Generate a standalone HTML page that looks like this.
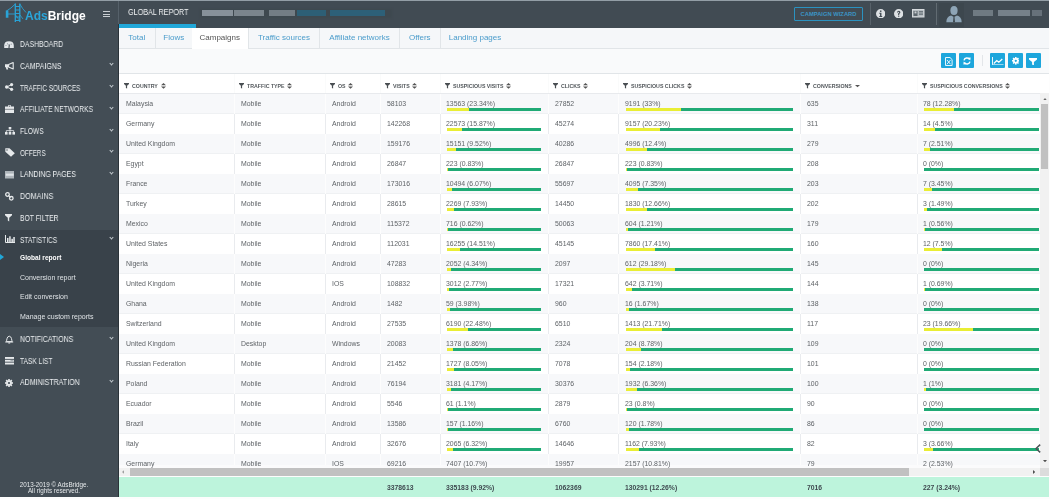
<!DOCTYPE html>
<html><head><meta charset="utf-8">
<style>
*{box-sizing:border-box}
html,body{margin:0;padding:0}
body{width:1050px;height:499px;overflow:hidden;position:relative;background:#fdfdfd;font-family:"Liberation Sans",sans-serif;}
.abs{position:absolute}
#topstrip{position:absolute;left:0;top:0;width:1049px;height:1px;background:#939ea6}
#sidebar{position:absolute;left:0;top:1px;width:118px;height:496px;background:#434d55}
#sbline{position:absolute;left:118px;top:24px;width:1px;height:473px;background:#2b3339}
#sbline2{position:absolute;left:118px;top:1px;width:1px;height:23px;background:#56616a}
.logo-ads{position:absolute;left:25px;top:9px;line-height:14px;font-size:12px;font-weight:bold;color:#2aa6da;letter-spacing:0}
.logo-ads b{color:#fff}
.ham{position:absolute;left:103px;top:11px;width:7px;height:1.4px;background:#c9ced2}
.mi{position:absolute;left:20px;font-size:8.4px;color:#eceff1;white-space:nowrap;line-height:10px;transform:scaleX(0.81);transform-origin:0 50%}
.chev{position:absolute;left:109.5px;width:3px;height:3px;border-right:1.1px solid #c5cbcf;border-bottom:1.1px solid #c5cbcf;transform:rotate(45deg)}
.ico{position:absolute;left:4px}
#substat{position:absolute;left:0;top:230px;width:118px;height:97px;background:#39424a}
.sub{position:absolute;left:20px;font-size:7px;color:#dfe3e6;white-space:nowrap;line-height:10px}
#topbar{position:absolute;left:119px;top:1px;width:930px;height:26.5px;background:#414b53}
#gr{position:absolute;left:127.5px;top:7px;font-size:8.4px;color:#f2f4f5;line-height:10px;white-space:nowrap;transform:scaleX(0.86);transform-origin:0 50%}
#grbar{position:absolute;left:119px;top:24px;width:77px;height:3.5px;background:#21a7d8}
#tabs{position:absolute;left:119px;top:27.5px;width:930px;height:21px;background:#f5f7f9;border-bottom:1px solid #e1e5e8}
.tab{position:absolute;top:0;height:20.5px;border-right:1px solid #e1e5e8;font-size:8px;color:#4a9ccb;line-height:20px;text-align:center;white-space:nowrap}
.tab.act{background:#fff;color:#555}
#toolbar{position:absolute;left:119px;top:48.5px;width:930px;height:25px;background:#f9fafb;border-bottom:1px solid #e1e5e8}
.tbtn{position:absolute;top:53px;width:15px;height:15px;background:#1da6dc;border-radius:1px}
#thead{position:absolute;left:119px;top:73.5px;width:930px;height:19.5px;background:#fff}
#hline{position:absolute;left:119px;top:93px;width:921px;height:1px;background:#e8eaed}
.hcell{position:absolute;top:83px;height:6px;white-space:nowrap;line-height:6px}
.filt{display:inline-block;vertical-align:top}
.srt{display:inline-block;vertical-align:top;margin-left:3px}
.ht{display:inline-block;vertical-align:top;margin-left:2.8px;font-size:5.25px;font-weight:bold;color:#52575b;line-height:6px}
.sort{display:inline-block;vertical-align:top;margin-left:3px;width:5px;height:5.5px;background:#666;clip-path:polygon(50% 0,100% 40%,0 40%,0 55%,100% 55%,50% 100%)}
.sortd{display:inline-block;vertical-align:top;margin-left:3px;margin-top:1.5px;width:5px;height:3px;background:#555;clip-path:polygon(0 0,100% 0,50% 100%)}
.hvb{position:absolute;top:73.5px;width:1px;height:19.5px;background:#fafbfb}
.row{position:absolute;left:119px;width:921px;height:20px}
.vb{position:absolute;width:1px;height:20px}
.cell{position:absolute;height:20px;line-height:20px;font-size:6.9px;color:#5f6367;white-space:nowrap}
.bar{position:absolute;height:2.6px;background:#20aa75}
.bar i{display:block;height:2.6px;background:#e9ee34}
#clip{position:absolute;left:119px;top:93px;width:930px;height:375px;overflow:hidden}
#vscroll{position:absolute;left:1040px;top:93px;width:9px;height:375px;background:#f1f1f1}
#vthumb{position:absolute;left:1040.5px;top:104px;width:7.5px;height:65px;background:#c1c1c1}
#hscroll{position:absolute;left:119px;top:467.5px;width:921px;height:8.5px;background:#f1f1f1}
#hthumb{position:absolute;left:130px;top:467.5px;width:779px;height:8.5px;background:#c1c1c1}
#hcorner{position:absolute;left:1040px;top:467.5px;width:9px;height:8.5px;background:#dcdcdc}
#footer{position:absolute;left:119px;top:476.5px;width:930px;height:20px;background:#bdf4dc}
.fcell{position:absolute;top:477.5px;height:20.5px;line-height:20.5px;font-size:6.8px;font-weight:bold;color:#3f4a50;white-space:nowrap}
#copy{position:absolute;left:0;top:481.5px;width:108px;text-align:center;font-size:6.3px;color:#e6e9eb;line-height:5.8px}
.cell,.mi,.sub,.tab,.ht,#gr,.fcell,#copy,.logo-ads{will-change:transform}
</style></head><body>
<div id="topstrip"></div>
<div id="sidebar"></div>
<div id="substat"></div>
<div id="sbline2"></div>
<div id="sbline"></div>
<div class="logo-ads">Ads<b>Bridge</b></div>
<div class="ham" style="top:11px"></div><div class="ham" style="top:13.5px"></div><div class="ham" style="top:16px"></div>

<div class="mi" style="top:39px;transform:scaleX(0.814)">DASHBOARD</div>
<div class="mi" style="top:60.5px;transform:scaleX(0.836)">CAMPAIGNS</div><div class="chev" style="top:62px"></div>
<div class="mi" style="top:82.5px;transform:scaleX(0.763)">TRAFFIC SOURCES</div><div class="chev" style="top:84px"></div>
<div class="mi" style="top:104px;transform:scaleX(0.798)">AFFILIATE NETWORKS</div><div class="chev" style="top:105.5px"></div>
<div class="mi" style="top:126px;transform:scaleX(0.796)">FLOWS</div><div class="chev" style="top:127.5px"></div>
<div class="mi" style="top:147.5px;transform:scaleX(0.754)">OFFERS</div><div class="chev" style="top:149px"></div>
<div class="mi" style="top:169px;transform:scaleX(0.826)">LANDING PAGES</div><div class="chev" style="top:170.5px"></div>
<div class="mi" style="top:191px;transform:scaleX(0.854)">DOMAINS</div>
<div class="mi" style="top:212.5px;transform:scaleX(0.811)">BOT FILTER</div>
<div class="mi" style="top:234.5px;transform:scaleX(0.791)">STATISTICS</div><div class="chev" style="top:236px"></div>
<div class="sub" style="top:252.6px;font-weight:bold;color:#fff;font-size:6.6px">Global report</div>
<div class="sub" style="top:272.6px">Conversion report</div>
<div class="sub" style="top:292.1px">Edit conversion</div>
<div class="sub" style="top:311.6px">Manage custom reports</div>
<div class="mi" style="top:334px;transform:scaleX(0.832)">NOTIFICATIONS</div><div class="chev" style="top:335.5px"></div>
<div class="mi" style="top:356px;transform:scaleX(0.785)">TASK LIST</div>
<div class="mi" style="top:377px;transform:scaleX(0.84)">ADMINISTRATION</div><div class="chev" style="top:378.5px"></div>
<div class="abs" style="left:0;top:254px;width:0;height:0;border-top:3.5px solid transparent;border-bottom:3.5px solid transparent;border-left:4px solid #21a7d8"></div>

<svg class="abs" style="left:2px;top:2px" width="26" height="22" viewBox="0 0 26 22">
 <g stroke="#29a3d6" fill="none">
  <path d="M13.3,1.5 V20 M17.8,1.5 V20" stroke-width="1.3"/>
  <path d="M13,4.5 H18 M13,8 H18 M13,11.5 H18 M13,15 H18 M13,18.5 H18" stroke-width="1"/>
  <path d="M4.5,9 Q9,6.5 13.3,2" stroke-width="0.9"/><path d="M17.8,2 Q20.5,7 24,10.5" stroke-width="0.9"/>
  <path d="M4.5,12 H13" stroke-width="0.9"/>
  <path d="M13.5,13 L18,19 M18,13 L21,17" stroke-width="0.8"/>
 </g>
 <path d="M3.8,8.5 h2.6 v7.3 h-2.6z" fill="#29a3d6"/>
</svg>
<svg class="abs" style="left:4.3px;top:40.8px" width="10" height="7.5" viewBox="0 0 10 7.5"><path d="M0.2,7.2 V4.6 Q0.2,0.2 5,0.2 Q9.8,0.2 9.8,4.6 V7.2 Q9.8,7.4 9.4,7.4 H0.6 Q0.2,7.4 0.2,7.2Z" fill="#e3e7ea"/><path d="M5,7 L5.3,3.5" stroke="#434d55" stroke-width="1.1"/><path d="M3.3,2.2 L4.2,3.8" stroke="#8a939a" stroke-width="0.8"/><circle cx="7.2" cy="3.2" r="0.6" fill="#8a939a"/><circle cx="2" cy="4.5" r="0.6" fill="#8a939a"/></svg>
<svg class="abs" style="left:4.5px;top:61.5px" width="9" height="8" viewBox="0 0 9 8"><path d="M0,2.3 H3.5 V5.3 H2.6 L3.2,7.6 H1.4 L0.9,5.3 H0 Z" fill="#e6e9eb"/><path d="M3.6,2.5 L8.2,0.6 V7 L3.6,5.1 Z" fill="none" stroke="#e6e9eb" stroke-width="1.1" stroke-linejoin="round"/></svg>
<svg class="abs" style="left:4.5px;top:82.8px" width="9" height="8" viewBox="0 0 9 8"><g fill="#e6e9eb"><circle cx="1.7" cy="4" r="1.7"/><circle cx="6.6" cy="1.6" r="1.6"/><circle cx="6.6" cy="6.3" r="1.6"/></g><path d="M1.7,4 L6.6,1.6 M1.7,4 L6.6,6.3" stroke="#e6e9eb" stroke-width="1"/></svg>
<svg class="abs" style="left:4.5px;top:104.5px" width="9" height="8" viewBox="0 0 9 8"><path d="M3,0.3 H6 V1.6 H9 V7.9 H0 V1.6 H3 Z" fill="#e6e9eb"/><path d="M3.8,0.9 H5.2 V1.6 H3.8Z" fill="#434d55"/><path d="M0,4.3 H9" stroke="#434d55" stroke-width="0.6"/></svg>
<svg class="abs" style="left:4.5px;top:127px" width="10" height="8" viewBox="0 0 10 8"><g fill="#e6e9eb"><rect x="3.7" y="0" width="2.6" height="2.3"/><rect x="0" y="5" width="2.6" height="2.6"/><rect x="3.7" y="5" width="2.6" height="2.6"/><rect x="7.4" y="5" width="2.6" height="2.6"/></g><path d="M5,2.3 V5 M1.3,5 V3.6 H8.7 V5" stroke="#e6e9eb" stroke-width="0.8" fill="none"/></svg>
<svg class="abs" style="left:4.5px;top:147.5px" width="10.5" height="9" viewBox="0 0 10.5 9"><path d="M0.3,0.3 H4.5 L9.8,5.2 L6,8.8 L0.3,3.8 Z" fill="#e6e9eb"/><circle cx="2" cy="2" r="0.7" fill="#434d55"/></svg>
<svg class="abs" style="left:4.5px;top:170.5px" width="9.5" height="8" viewBox="0 0 9.5 8"><rect x="0" y="0" width="9.5" height="7.5" fill="#aeb5ba"/><rect x="0.8" y="2.6" width="7.9" height="2.2" fill="#dfe3e6"/></svg>
<svg class="abs" style="left:4.5px;top:191.5px" width="9" height="9" viewBox="0 0 9 9"><g fill="none" stroke="#e6e9eb" stroke-width="1.3"><circle cx="2.5" cy="2.5" r="1.8"/><circle cx="6.3" cy="6.3" r="1.8"/></g><path d="M3.3,3.3 L5.5,5.5" stroke="#e6e9eb" stroke-width="1.1"/></svg>
<svg class="abs" style="left:5.2px;top:214.3px" width="7" height="7.5" viewBox="0 0 7 7.5"><path d="M0,0 H7 V1.3 L4.2,3.8 V7.5 L2.8,6.5 V3.8 L0,1.3 Z" fill="#e6e9eb"/></svg>
<svg class="abs" style="left:4.5px;top:235px" width="10" height="8" viewBox="0 0 10 8"><path d="M0.5,0 V7.5 H10" stroke="#e6e9eb" stroke-width="1" fill="none"/><g fill="#e6e9eb"><rect x="2" y="3" width="1.5" height="4"/><rect x="4.2" y="1.3" width="1.5" height="5.7"/><rect x="6.4" y="3.8" width="1.5" height="3.2"/><rect x="8.3" y="2" width="1.5" height="5"/></g></svg>
<svg class="abs" style="left:5px;top:335px" width="8.5" height="9" viewBox="0 0 8.5 9"><path d="M1.3,6.6 C2,5.3 1.6,1.4 4.25,1.2 C6.9,1.4 6.5,5.3 7.2,6.6 Z" fill="none" stroke="#e6e9eb" stroke-width="1"/><path d="M0.3,7 H8.2" stroke="#e6e9eb" stroke-width="1"/><path d="M3.3,8 H5.2" stroke="#e6e9eb" stroke-width="1"/></svg>
<svg class="abs" style="left:4.5px;top:357px" width="9.5" height="7.5" viewBox="0 0 9.5 7.5"><g fill="#e6e9eb"><rect x="0" y="0" width="9.5" height="1.9"/><rect x="0" y="2.8" width="9.5" height="1.9"/><rect x="0" y="5.6" width="9.5" height="1.9"/></g><rect x="5.5" y="3.3" width="3" height="0.9" fill="#8d969c"/></svg>
<svg class="abs" style="left:5px;top:378.7px" width="8" height="8" viewBox="0 0 8 8"><g fill="#e6e9eb"><circle cx="4" cy="4" r="2.8"/><rect x="3.2" y="0" width="1.6" height="8"/><rect x="0" y="3.2" width="8" height="1.6"/><rect x="3.2" y="0" width="1.6" height="8" transform="rotate(45 4 4)"/><rect x="3.2" y="0" width="1.6" height="8" transform="rotate(-45 4 4)"/></g><circle cx="4" cy="4" r="1.1" fill="#434d55"/></svg>

<div id="copy">2013-2019 © AdsBridge.<br>All rights reserved.</div>

<div id="topbar"></div>
<div id="gr">GLOBAL REPORT</div>
<div id="grbar"></div>
<div class="abs" style="filter:blur(0.8px);left:200px;top:8.5px;width:192px;height:9px;background:#3e484f"></div>
<div class="abs" style="filter:blur(0.5px);left:202px;top:10px;width:31px;height:6px;background:#87919a"></div>
<div class="abs" style="filter:blur(0.5px);left:234px;top:10px;width:30px;height:6px;background:#7b858d"></div>
<div class="abs" style="filter:blur(0.5px);left:269px;top:10px;width:26px;height:6px;background:#737d85"></div>
<div class="abs" style="filter:blur(0.5px);left:297px;top:10px;width:29px;height:6px;background:#2d5f76"></div>
<div class="abs" style="filter:blur(0.5px);left:330px;top:10px;width:55px;height:6px;background:#2d6078"></div>
<div class="abs" style="left:794px;top:7px;width:69px;height:14px;border:1px solid #2b92c0;border-radius:1px"></div>
<div class="abs" style="left:794px;top:7px;width:69px;height:14px;line-height:14px;text-align:center;font-size:5.8px;font-weight:bold;color:#3b94c4;white-space:nowrap">CAMPAIGN WIZARD</div>
<div class="abs" style="left:870px;top:3px;width:1px;height:22px;background:#58626a"></div>
<svg class="abs" style="left:876px;top:8.7px" width="9.4" height="9.4" viewBox="0 0 10 10"><circle cx="5" cy="5" r="5" fill="#dde1e4"/><rect x="4.2" y="1.6" width="1.6" height="1.5" fill="#414b53"/><path d="M3.5,4 H5.8 V7.5 H6.6 V8.5 H3.5 V7.5 H4.3 V5 H3.5Z" fill="#414b53"/></svg>
<svg class="abs" style="left:894px;top:8.7px" width="9.4" height="9.4" viewBox="0 0 10 10"><circle cx="5" cy="5" r="5" fill="#dde1e4"/><path d="M3.2,3.8 Q3.3,1.8 5.1,1.8 Q6.9,1.9 6.8,3.6 Q6.6,4.6 5.6,5.1 L5.6,6.3 H4.4 L4.4,4.6 Q5.5,4.1 5.5,3.6 Q5.4,3 5,3 Q4.5,3 4.4,3.8Z" fill="#414b53"/><rect x="4.4" y="7" width="1.2" height="1.3" fill="#414b53"/></svg>
<svg class="abs" style="left:912px;top:9px" width="12.5" height="8.5" viewBox="0 0 12.5 8.5"><rect x="0.5" y="0.5" width="11.5" height="7.5" fill="#b5bcc1" stroke="#d6dadd" stroke-width="1"/><rect x="1.5" y="2" width="4" height="5" fill="#5d676e"/><rect x="2.5" y="2.4" width="2" height="2" fill="#c9ced2"/><rect x="7" y="2.2" width="4" height="1.2" fill="#5d676e"/><rect x="7" y="4.5" width="4" height="1.2" fill="#5d676e"/></svg>
<div class="abs" style="left:936px;top:3px;width:1px;height:22px;background:#616b72"></div>
<div class="abs" style="left:938.8px;top:2.5px;width:25.5px;height:24px;background:#3d474e"></div>
<svg class="abs" style="left:945.5px;top:6px" width="16" height="16.5" viewBox="0 0 16 16.5"><ellipse cx="8" cy="4.5" rx="3.6" ry="4.5" fill="#8ea5b7"/><path d="M0.3,16.3 Q0.5,10.5 5,9.6 L8,11 L11,9.6 Q15.5,10.5 15.7,16.3Z" fill="#8ea5b7"/><path d="M7.5,10.5 H8.5 L9,16.3 H7Z" fill="#3d474e"/></svg>
<div class="abs" style="filter:blur(0.5px);left:973px;top:10px;width:19.5px;height:6px;background:#6f7a82"></div>
<div class="abs" style="filter:blur(0.5px);left:997.5px;top:10px;width:32px;height:6px;background:#76818a"></div>
<div class="abs" style="filter:blur(0.5px);left:1031.5px;top:10px;width:10px;height:6px;background:#67717a"></div>


<div id="tabs">
<div class="tab" style="left:0;width:36.5px">Total</div>
<div class="tab" style="left:36.5px;width:36.5px">Flows</div>
<div class="tab act" style="left:73px;width:56.5px;height:21px">Campaigns</div>
<div class="tab" style="left:129.5px;width:71px">Traffic sources</div>
<div class="tab" style="left:200.5px;width:80px">Affiliate networks</div>
<div class="tab" style="left:280.5px;width:40.5px">Offers</div>
<div class="tab" style="left:321px;width:70px;border-right:none">Landing pages</div>
</div>
<div id="toolbar"></div>
<div class="tbtn" style="left:941px"></div>
<svg class="abs" style="left:945px;top:56.5px" width="7.6" height="9" viewBox="0 0 7.6 9"><path d="M0.5,0.5 H5 L7.1,2.6 V8.5 H0.5Z" fill="none" stroke="#e8f6fc" stroke-width="1"/><path d="M2,3 L5.5,7.2 M5.5,3 L2,7.2" stroke="#e8f6fc" stroke-width="1"/></svg>
<div class="tbtn" style="left:958.5px"></div>
<svg class="abs" style="left:962.5px;top:57px" width="8" height="8" viewBox="0 0 8 8"><path d="M1,3.3 A3,3 0 0 1 6.6,2.6" fill="none" stroke="#fff" stroke-width="1.4"/><path d="M5,0.8 L7.6,0.5 L7.3,3.4Z" fill="#fff"/><path d="M7,4.7 A3,3 0 0 1 1.4,5.4" fill="none" stroke="#fff" stroke-width="1.4"/><path d="M3,7.2 L0.4,7.5 L0.7,4.6Z" fill="#fff"/></svg>
<div class="abs" style="left:982px;top:55px;width:1px;height:11px;background:#e3e6e9"></div>
<div class="tbtn" style="left:990px"></div>
<svg class="abs" style="left:992px;top:56.5px" width="11.5" height="8.5" viewBox="0 0 11.5 8.5"><path d="M0.5,0 V7.9 H11.5" fill="none" stroke="#e8f6fc" stroke-width="1"/><path d="M1.8,6.5 L4.8,3.6 L6.8,5.3 L10.3,2" fill="none" stroke="#fff" stroke-width="1.2"/></svg>
<div class="tbtn" style="left:1008px"></div>
<svg class="abs" style="left:1011.6px;top:57.2px" width="7.6" height="7.6" viewBox="0 0 8 8"><g fill="#fff"><circle cx="4" cy="4" r="2.9"/><rect x="3.2" y="0" width="1.6" height="8"/><rect x="0" y="3.2" width="8" height="1.6"/><rect x="3.2" y="0" width="1.6" height="8" transform="rotate(45 4 4)"/><rect x="3.2" y="0" width="1.6" height="8" transform="rotate(-45 4 4)"/></g><circle cx="4" cy="4" r="1.2" fill="#1da6dc"/></svg>
<div class="tbtn" style="left:1025.5px"></div>
<svg class="abs" style="left:1029px;top:57.8px" width="8" height="7.5" viewBox="0 0 8 7.5"><path d="M0,0 H8 V1.4 L4.9,4 V7.5 L3.1,6.6 V4 L0,1.4Z" fill="#fff"/></svg>

<div id="thead"></div>
<div class="hcell" style="left:124px"><svg class="filt" width="5" height="5.5" viewBox="0 0 5 5.5"><path d="M0,0H5V0.9L3.1,2.7V5.5L1.9,4.9V2.7L0,0.9Z" fill="#4a4f53"/></svg><span class="ht">COUNTRY</span><svg class="srt" width="5" height="6" viewBox="0 0 5 6"><path d="M2.5,0L5,2.2H0Z M0,3.5H5L2.5,5.7Z" fill="#555"/></svg></div>
<div class="hcell" style="left:239px"><svg class="filt" width="5" height="5.5" viewBox="0 0 5 5.5"><path d="M0,0H5V0.9L3.1,2.7V5.5L1.9,4.9V2.7L0,0.9Z" fill="#4a4f53"/></svg><span class="ht">TRAFFIC TYPE</span><svg class="srt" width="5" height="6" viewBox="0 0 5 6"><path d="M2.5,0L5,2.2H0Z M0,3.5H5L2.5,5.7Z" fill="#555"/></svg></div>
<div class="hvb" style="left:234px"></div>
<div class="hcell" style="left:330px"><svg class="filt" width="5" height="5.5" viewBox="0 0 5 5.5"><path d="M0,0H5V0.9L3.1,2.7V5.5L1.9,4.9V2.7L0,0.9Z" fill="#4a4f53"/></svg><span class="ht">OS</span><svg class="srt" width="5" height="6" viewBox="0 0 5 6"><path d="M2.5,0L5,2.2H0Z M0,3.5H5L2.5,5.7Z" fill="#555"/></svg></div>
<div class="hvb" style="left:325px"></div>
<div class="hcell" style="left:385px"><svg class="filt" width="5" height="5.5" viewBox="0 0 5 5.5"><path d="M0,0H5V0.9L3.1,2.7V5.5L1.9,4.9V2.7L0,0.9Z" fill="#4a4f53"/></svg><span class="ht">VISITS</span><svg class="srt" width="5" height="6" viewBox="0 0 5 6"><path d="M2.5,0L5,2.2H0Z M0,3.5H5L2.5,5.7Z" fill="#555"/></svg></div>
<div class="hvb" style="left:380px"></div>
<div class="hcell" style="left:445px"><svg class="filt" width="5" height="5.5" viewBox="0 0 5 5.5"><path d="M0,0H5V0.9L3.1,2.7V5.5L1.9,4.9V2.7L0,0.9Z" fill="#4a4f53"/></svg><span class="ht">SUSPICIOUS VISITS</span><svg class="srt" width="5" height="6" viewBox="0 0 5 6"><path d="M2.5,0L5,2.2H0Z M0,3.5H5L2.5,5.7Z" fill="#555"/></svg></div>
<div class="hvb" style="left:440px"></div>
<div class="hcell" style="left:553px"><svg class="filt" width="5" height="5.5" viewBox="0 0 5 5.5"><path d="M0,0H5V0.9L3.1,2.7V5.5L1.9,4.9V2.7L0,0.9Z" fill="#4a4f53"/></svg><span class="ht">CLICKS</span><svg class="srt" width="5" height="6" viewBox="0 0 5 6"><path d="M2.5,0L5,2.2H0Z M0,3.5H5L2.5,5.7Z" fill="#555"/></svg></div>
<div class="hvb" style="left:548px"></div>
<div class="hcell" style="left:623px"><svg class="filt" width="5" height="5.5" viewBox="0 0 5 5.5"><path d="M0,0H5V0.9L3.1,2.7V5.5L1.9,4.9V2.7L0,0.9Z" fill="#4a4f53"/></svg><span class="ht">SUSPICIOUS CLICKS</span><svg class="srt" width="5" height="6" viewBox="0 0 5 6"><path d="M2.5,0L5,2.2H0Z M0,3.5H5L2.5,5.7Z" fill="#555"/></svg></div>
<div class="hvb" style="left:618px"></div>
<div class="hcell" style="left:805px"><svg class="filt" width="5" height="5.5" viewBox="0 0 5 5.5"><path d="M0,0H5V0.9L3.1,2.7V5.5L1.9,4.9V2.7L0,0.9Z" fill="#4a4f53"/></svg><span class="ht">CONVERSIONS</span><svg class="srt" width="5" height="3" viewBox="0 0 5 3" style="margin-top:1.5px"><path d="M0,0H5L2.5,2.3Z" fill="#555"/></svg></div>
<div class="hvb" style="left:800px"></div>
<div class="hcell" style="left:922px"><svg class="filt" width="5" height="5.5" viewBox="0 0 5 5.5"><path d="M0,0H5V0.9L3.1,2.7V5.5L1.9,4.9V2.7L0,0.9Z" fill="#4a4f53"/></svg><span class="ht">SUSPICIOUS CONVERSIONS</span><svg class="srt" width="5" height="6" viewBox="0 0 5 6"><path d="M2.5,0L5,2.2H0Z M0,3.5H5L2.5,5.7Z" fill="#555"/></svg></div>
<div class="hvb" style="left:917px"></div>
<div id="clip"><div style="position:absolute;left:-119px;top:-93px">
<div class="row" style="top:93px;height:21px;background:#f7f8fa"></div>
<div class="row" style="top:114px;height:20px;background:#ffffff"></div>
<div class="row" style="top:134px;height:20px;background:#f7f8fa"></div>
<div class="row" style="top:154px;height:20px;background:#ffffff"></div>
<div class="row" style="top:174px;height:20px;background:#f7f8fa"></div>
<div class="row" style="top:194px;height:20px;background:#ffffff"></div>
<div class="row" style="top:214px;height:20px;background:#f7f8fa"></div>
<div class="row" style="top:234px;height:20px;background:#ffffff"></div>
<div class="row" style="top:254px;height:20px;background:#f7f8fa"></div>
<div class="row" style="top:274px;height:20px;background:#ffffff"></div>
<div class="row" style="top:294px;height:20px;background:#f7f8fa"></div>
<div class="row" style="top:314px;height:20px;background:#ffffff"></div>
<div class="row" style="top:334px;height:20px;background:#f7f8fa"></div>
<div class="row" style="top:354px;height:20px;background:#ffffff"></div>
<div class="row" style="top:374px;height:20px;background:#f7f8fa"></div>
<div class="row" style="top:394px;height:20px;background:#ffffff"></div>
<div class="row" style="top:414px;height:20px;background:#f7f8fa"></div>
<div class="row" style="top:434px;height:20px;background:#ffffff"></div>
<div class="row" style="top:454px;height:20px;background:#f7f8fa"></div>
<div class="row" style="top:113px;height:1px;background:#eff1f3"></div>
<div class="vb" style="left:234px;top:93px;height:21px;background:#fdfdfd"></div>
<div class="vb" style="left:325px;top:93px;height:21px;background:#fdfdfd"></div>
<div class="vb" style="left:380px;top:93px;height:21px;background:#fdfdfd"></div>
<div class="vb" style="left:440px;top:93px;height:21px;background:#fdfdfd"></div>
<div class="vb" style="left:548px;top:93px;height:21px;background:#fdfdfd"></div>
<div class="vb" style="left:618px;top:93px;height:21px;background:#fdfdfd"></div>
<div class="vb" style="left:800px;top:93px;height:21px;background:#fdfdfd"></div>
<div class="vb" style="left:917px;top:93px;height:21px;background:#fdfdfd"></div>
<div class="vb" style="left:234px;top:114px;height:20px;background:#e9ebee"></div>
<div class="vb" style="left:325px;top:114px;height:20px;background:#e9ebee"></div>
<div class="vb" style="left:380px;top:114px;height:20px;background:#e9ebee"></div>
<div class="vb" style="left:440px;top:114px;height:20px;background:#e9ebee"></div>
<div class="vb" style="left:548px;top:114px;height:20px;background:#e9ebee"></div>
<div class="vb" style="left:618px;top:114px;height:20px;background:#e9ebee"></div>
<div class="vb" style="left:800px;top:114px;height:20px;background:#e9ebee"></div>
<div class="vb" style="left:917px;top:114px;height:20px;background:#e9ebee"></div>
<div class="row" style="top:153px;height:1px;background:#eff1f3"></div>
<div class="vb" style="left:234px;top:134px;height:20px;background:#fdfdfd"></div>
<div class="vb" style="left:325px;top:134px;height:20px;background:#fdfdfd"></div>
<div class="vb" style="left:380px;top:134px;height:20px;background:#fdfdfd"></div>
<div class="vb" style="left:440px;top:134px;height:20px;background:#fdfdfd"></div>
<div class="vb" style="left:548px;top:134px;height:20px;background:#fdfdfd"></div>
<div class="vb" style="left:618px;top:134px;height:20px;background:#fdfdfd"></div>
<div class="vb" style="left:800px;top:134px;height:20px;background:#fdfdfd"></div>
<div class="vb" style="left:917px;top:134px;height:20px;background:#fdfdfd"></div>
<div class="vb" style="left:234px;top:154px;height:20px;background:#e9ebee"></div>
<div class="vb" style="left:325px;top:154px;height:20px;background:#e9ebee"></div>
<div class="vb" style="left:380px;top:154px;height:20px;background:#e9ebee"></div>
<div class="vb" style="left:440px;top:154px;height:20px;background:#e9ebee"></div>
<div class="vb" style="left:548px;top:154px;height:20px;background:#e9ebee"></div>
<div class="vb" style="left:618px;top:154px;height:20px;background:#e9ebee"></div>
<div class="vb" style="left:800px;top:154px;height:20px;background:#e9ebee"></div>
<div class="vb" style="left:917px;top:154px;height:20px;background:#e9ebee"></div>
<div class="row" style="top:193px;height:1px;background:#eff1f3"></div>
<div class="vb" style="left:234px;top:174px;height:20px;background:#fdfdfd"></div>
<div class="vb" style="left:325px;top:174px;height:20px;background:#fdfdfd"></div>
<div class="vb" style="left:380px;top:174px;height:20px;background:#fdfdfd"></div>
<div class="vb" style="left:440px;top:174px;height:20px;background:#fdfdfd"></div>
<div class="vb" style="left:548px;top:174px;height:20px;background:#fdfdfd"></div>
<div class="vb" style="left:618px;top:174px;height:20px;background:#fdfdfd"></div>
<div class="vb" style="left:800px;top:174px;height:20px;background:#fdfdfd"></div>
<div class="vb" style="left:917px;top:174px;height:20px;background:#fdfdfd"></div>
<div class="vb" style="left:234px;top:194px;height:20px;background:#e9ebee"></div>
<div class="vb" style="left:325px;top:194px;height:20px;background:#e9ebee"></div>
<div class="vb" style="left:380px;top:194px;height:20px;background:#e9ebee"></div>
<div class="vb" style="left:440px;top:194px;height:20px;background:#e9ebee"></div>
<div class="vb" style="left:548px;top:194px;height:20px;background:#e9ebee"></div>
<div class="vb" style="left:618px;top:194px;height:20px;background:#e9ebee"></div>
<div class="vb" style="left:800px;top:194px;height:20px;background:#e9ebee"></div>
<div class="vb" style="left:917px;top:194px;height:20px;background:#e9ebee"></div>
<div class="row" style="top:233px;height:1px;background:#eff1f3"></div>
<div class="vb" style="left:234px;top:214px;height:20px;background:#fdfdfd"></div>
<div class="vb" style="left:325px;top:214px;height:20px;background:#fdfdfd"></div>
<div class="vb" style="left:380px;top:214px;height:20px;background:#fdfdfd"></div>
<div class="vb" style="left:440px;top:214px;height:20px;background:#fdfdfd"></div>
<div class="vb" style="left:548px;top:214px;height:20px;background:#fdfdfd"></div>
<div class="vb" style="left:618px;top:214px;height:20px;background:#fdfdfd"></div>
<div class="vb" style="left:800px;top:214px;height:20px;background:#fdfdfd"></div>
<div class="vb" style="left:917px;top:214px;height:20px;background:#fdfdfd"></div>
<div class="vb" style="left:234px;top:234px;height:20px;background:#e9ebee"></div>
<div class="vb" style="left:325px;top:234px;height:20px;background:#e9ebee"></div>
<div class="vb" style="left:380px;top:234px;height:20px;background:#e9ebee"></div>
<div class="vb" style="left:440px;top:234px;height:20px;background:#e9ebee"></div>
<div class="vb" style="left:548px;top:234px;height:20px;background:#e9ebee"></div>
<div class="vb" style="left:618px;top:234px;height:20px;background:#e9ebee"></div>
<div class="vb" style="left:800px;top:234px;height:20px;background:#e9ebee"></div>
<div class="vb" style="left:917px;top:234px;height:20px;background:#e9ebee"></div>
<div class="row" style="top:273px;height:1px;background:#eff1f3"></div>
<div class="vb" style="left:234px;top:254px;height:20px;background:#fdfdfd"></div>
<div class="vb" style="left:325px;top:254px;height:20px;background:#fdfdfd"></div>
<div class="vb" style="left:380px;top:254px;height:20px;background:#fdfdfd"></div>
<div class="vb" style="left:440px;top:254px;height:20px;background:#fdfdfd"></div>
<div class="vb" style="left:548px;top:254px;height:20px;background:#fdfdfd"></div>
<div class="vb" style="left:618px;top:254px;height:20px;background:#fdfdfd"></div>
<div class="vb" style="left:800px;top:254px;height:20px;background:#fdfdfd"></div>
<div class="vb" style="left:917px;top:254px;height:20px;background:#fdfdfd"></div>
<div class="vb" style="left:234px;top:274px;height:20px;background:#e9ebee"></div>
<div class="vb" style="left:325px;top:274px;height:20px;background:#e9ebee"></div>
<div class="vb" style="left:380px;top:274px;height:20px;background:#e9ebee"></div>
<div class="vb" style="left:440px;top:274px;height:20px;background:#e9ebee"></div>
<div class="vb" style="left:548px;top:274px;height:20px;background:#e9ebee"></div>
<div class="vb" style="left:618px;top:274px;height:20px;background:#e9ebee"></div>
<div class="vb" style="left:800px;top:274px;height:20px;background:#e9ebee"></div>
<div class="vb" style="left:917px;top:274px;height:20px;background:#e9ebee"></div>
<div class="row" style="top:313px;height:1px;background:#eff1f3"></div>
<div class="vb" style="left:234px;top:294px;height:20px;background:#fdfdfd"></div>
<div class="vb" style="left:325px;top:294px;height:20px;background:#fdfdfd"></div>
<div class="vb" style="left:380px;top:294px;height:20px;background:#fdfdfd"></div>
<div class="vb" style="left:440px;top:294px;height:20px;background:#fdfdfd"></div>
<div class="vb" style="left:548px;top:294px;height:20px;background:#fdfdfd"></div>
<div class="vb" style="left:618px;top:294px;height:20px;background:#fdfdfd"></div>
<div class="vb" style="left:800px;top:294px;height:20px;background:#fdfdfd"></div>
<div class="vb" style="left:917px;top:294px;height:20px;background:#fdfdfd"></div>
<div class="vb" style="left:234px;top:314px;height:20px;background:#e9ebee"></div>
<div class="vb" style="left:325px;top:314px;height:20px;background:#e9ebee"></div>
<div class="vb" style="left:380px;top:314px;height:20px;background:#e9ebee"></div>
<div class="vb" style="left:440px;top:314px;height:20px;background:#e9ebee"></div>
<div class="vb" style="left:548px;top:314px;height:20px;background:#e9ebee"></div>
<div class="vb" style="left:618px;top:314px;height:20px;background:#e9ebee"></div>
<div class="vb" style="left:800px;top:314px;height:20px;background:#e9ebee"></div>
<div class="vb" style="left:917px;top:314px;height:20px;background:#e9ebee"></div>
<div class="row" style="top:353px;height:1px;background:#eff1f3"></div>
<div class="vb" style="left:234px;top:334px;height:20px;background:#fdfdfd"></div>
<div class="vb" style="left:325px;top:334px;height:20px;background:#fdfdfd"></div>
<div class="vb" style="left:380px;top:334px;height:20px;background:#fdfdfd"></div>
<div class="vb" style="left:440px;top:334px;height:20px;background:#fdfdfd"></div>
<div class="vb" style="left:548px;top:334px;height:20px;background:#fdfdfd"></div>
<div class="vb" style="left:618px;top:334px;height:20px;background:#fdfdfd"></div>
<div class="vb" style="left:800px;top:334px;height:20px;background:#fdfdfd"></div>
<div class="vb" style="left:917px;top:334px;height:20px;background:#fdfdfd"></div>
<div class="vb" style="left:234px;top:354px;height:20px;background:#e9ebee"></div>
<div class="vb" style="left:325px;top:354px;height:20px;background:#e9ebee"></div>
<div class="vb" style="left:380px;top:354px;height:20px;background:#e9ebee"></div>
<div class="vb" style="left:440px;top:354px;height:20px;background:#e9ebee"></div>
<div class="vb" style="left:548px;top:354px;height:20px;background:#e9ebee"></div>
<div class="vb" style="left:618px;top:354px;height:20px;background:#e9ebee"></div>
<div class="vb" style="left:800px;top:354px;height:20px;background:#e9ebee"></div>
<div class="vb" style="left:917px;top:354px;height:20px;background:#e9ebee"></div>
<div class="row" style="top:393px;height:1px;background:#eff1f3"></div>
<div class="vb" style="left:234px;top:374px;height:20px;background:#fdfdfd"></div>
<div class="vb" style="left:325px;top:374px;height:20px;background:#fdfdfd"></div>
<div class="vb" style="left:380px;top:374px;height:20px;background:#fdfdfd"></div>
<div class="vb" style="left:440px;top:374px;height:20px;background:#fdfdfd"></div>
<div class="vb" style="left:548px;top:374px;height:20px;background:#fdfdfd"></div>
<div class="vb" style="left:618px;top:374px;height:20px;background:#fdfdfd"></div>
<div class="vb" style="left:800px;top:374px;height:20px;background:#fdfdfd"></div>
<div class="vb" style="left:917px;top:374px;height:20px;background:#fdfdfd"></div>
<div class="vb" style="left:234px;top:394px;height:20px;background:#e9ebee"></div>
<div class="vb" style="left:325px;top:394px;height:20px;background:#e9ebee"></div>
<div class="vb" style="left:380px;top:394px;height:20px;background:#e9ebee"></div>
<div class="vb" style="left:440px;top:394px;height:20px;background:#e9ebee"></div>
<div class="vb" style="left:548px;top:394px;height:20px;background:#e9ebee"></div>
<div class="vb" style="left:618px;top:394px;height:20px;background:#e9ebee"></div>
<div class="vb" style="left:800px;top:394px;height:20px;background:#e9ebee"></div>
<div class="vb" style="left:917px;top:394px;height:20px;background:#e9ebee"></div>
<div class="row" style="top:433px;height:1px;background:#eff1f3"></div>
<div class="vb" style="left:234px;top:414px;height:20px;background:#fdfdfd"></div>
<div class="vb" style="left:325px;top:414px;height:20px;background:#fdfdfd"></div>
<div class="vb" style="left:380px;top:414px;height:20px;background:#fdfdfd"></div>
<div class="vb" style="left:440px;top:414px;height:20px;background:#fdfdfd"></div>
<div class="vb" style="left:548px;top:414px;height:20px;background:#fdfdfd"></div>
<div class="vb" style="left:618px;top:414px;height:20px;background:#fdfdfd"></div>
<div class="vb" style="left:800px;top:414px;height:20px;background:#fdfdfd"></div>
<div class="vb" style="left:917px;top:414px;height:20px;background:#fdfdfd"></div>
<div class="vb" style="left:234px;top:434px;height:20px;background:#e9ebee"></div>
<div class="vb" style="left:325px;top:434px;height:20px;background:#e9ebee"></div>
<div class="vb" style="left:380px;top:434px;height:20px;background:#e9ebee"></div>
<div class="vb" style="left:440px;top:434px;height:20px;background:#e9ebee"></div>
<div class="vb" style="left:548px;top:434px;height:20px;background:#e9ebee"></div>
<div class="vb" style="left:618px;top:434px;height:20px;background:#e9ebee"></div>
<div class="vb" style="left:800px;top:434px;height:20px;background:#e9ebee"></div>
<div class="vb" style="left:917px;top:434px;height:20px;background:#e9ebee"></div>
<div class="row" style="top:473px;height:1px;background:#eff1f3"></div>
<div class="vb" style="left:234px;top:454px;height:20px;background:#fdfdfd"></div>
<div class="vb" style="left:325px;top:454px;height:20px;background:#fdfdfd"></div>
<div class="vb" style="left:380px;top:454px;height:20px;background:#fdfdfd"></div>
<div class="vb" style="left:440px;top:454px;height:20px;background:#fdfdfd"></div>
<div class="vb" style="left:548px;top:454px;height:20px;background:#fdfdfd"></div>
<div class="vb" style="left:618px;top:454px;height:20px;background:#fdfdfd"></div>
<div class="vb" style="left:800px;top:454px;height:20px;background:#fdfdfd"></div>
<div class="vb" style="left:917px;top:454px;height:20px;background:#fdfdfd"></div>
<div class="row" style="top:465px;height:3px;background:#fbfbfc"></div>
<div class="cell" style="left:125.5px;top:93.8px">Malaysia</div>
<div class="cell" style="left:240.5px;top:93.8px">Mobile</div>
<div class="cell" style="left:331.5px;top:93.8px">Android</div>
<div class="cell" style="left:386.5px;top:93.8px">58103</div>
<div class="cell" style="left:446.3px;top:93.8px">13563 (23.34%)</div>
<div class="bar" style="left:446.8px;top:108.2px;width:93.8px"><i style="width:21.9px"></i></div>
<div class="cell" style="left:554.5px;top:93.8px">27852</div>
<div class="cell" style="left:624.5px;top:93.8px">9191 (33%)</div>
<div class="bar" style="left:626px;top:108.2px;width:167px"><i style="width:55.1px"></i></div>
<div class="cell" style="left:806.5px;top:93.8px">635</div>
<div class="cell" style="left:922.5px;top:93.8px">78 (12.28%)</div>
<div class="bar" style="left:923.8px;top:108.2px;width:115px"><i style="width:30.6px"></i></div>
<div class="cell" style="left:125.5px;top:113.8px">Germany</div>
<div class="cell" style="left:240.5px;top:113.8px">Mobile</div>
<div class="cell" style="left:331.5px;top:113.8px">Android</div>
<div class="cell" style="left:386.5px;top:113.8px">142268</div>
<div class="cell" style="left:446.3px;top:113.8px">22573 (15.87%)</div>
<div class="bar" style="left:446.8px;top:128.2px;width:93.8px"><i style="width:14.9px"></i></div>
<div class="cell" style="left:554.5px;top:113.8px">45274</div>
<div class="cell" style="left:624.5px;top:113.8px">9157 (20.23%)</div>
<div class="bar" style="left:626px;top:128.2px;width:167px"><i style="width:33.8px"></i></div>
<div class="cell" style="left:806.5px;top:113.8px">311</div>
<div class="cell" style="left:922.5px;top:113.8px">14 (4.5%)</div>
<div class="bar" style="left:923.8px;top:128.2px;width:115px"><i style="width:11.2px"></i></div>
<div class="cell" style="left:125.5px;top:133.8px">United Kingdom</div>
<div class="cell" style="left:240.5px;top:133.8px">Mobile</div>
<div class="cell" style="left:331.5px;top:133.8px">Android</div>
<div class="cell" style="left:386.5px;top:133.8px">159176</div>
<div class="cell" style="left:446.3px;top:133.8px">15151 (9.52%)</div>
<div class="bar" style="left:446.8px;top:148.2px;width:93.8px"><i style="width:8.9px"></i></div>
<div class="cell" style="left:554.5px;top:133.8px">40286</div>
<div class="cell" style="left:624.5px;top:133.8px">4996 (12.4%)</div>
<div class="bar" style="left:626px;top:148.2px;width:167px"><i style="width:20.7px"></i></div>
<div class="cell" style="left:806.5px;top:133.8px">279</div>
<div class="cell" style="left:922.5px;top:133.8px">7 (2.51%)</div>
<div class="bar" style="left:923.8px;top:148.2px;width:115px"><i style="width:6.3px"></i></div>
<div class="cell" style="left:125.5px;top:153.8px">Egypt</div>
<div class="cell" style="left:240.5px;top:153.8px">Mobile</div>
<div class="cell" style="left:331.5px;top:153.8px">Android</div>
<div class="cell" style="left:386.5px;top:153.8px">26847</div>
<div class="cell" style="left:446.3px;top:153.8px">223 (0.83%)</div>
<div class="bar" style="left:446.8px;top:168.2px;width:93.8px"><i style="width:0.8px"></i></div>
<div class="cell" style="left:554.5px;top:153.8px">26847</div>
<div class="cell" style="left:624.5px;top:153.8px">223 (0.83%)</div>
<div class="bar" style="left:626px;top:168.2px;width:167px"><i style="width:1.4px"></i></div>
<div class="cell" style="left:806.5px;top:153.8px">208</div>
<div class="cell" style="left:922.5px;top:153.8px">0 (0%)</div>
<div class="bar" style="left:923.8px;top:168.2px;width:115px"><i style="width:0.0px"></i></div>
<div class="cell" style="left:125.5px;top:173.8px">France</div>
<div class="cell" style="left:240.5px;top:173.8px">Mobile</div>
<div class="cell" style="left:331.5px;top:173.8px">Android</div>
<div class="cell" style="left:386.5px;top:173.8px">173016</div>
<div class="cell" style="left:446.3px;top:173.8px">10494 (6.07%)</div>
<div class="bar" style="left:446.8px;top:188.2px;width:93.8px"><i style="width:5.7px"></i></div>
<div class="cell" style="left:554.5px;top:173.8px">55697</div>
<div class="cell" style="left:624.5px;top:173.8px">4095 (7.35%)</div>
<div class="bar" style="left:626px;top:188.2px;width:167px"><i style="width:12.3px"></i></div>
<div class="cell" style="left:806.5px;top:173.8px">203</div>
<div class="cell" style="left:922.5px;top:173.8px">7 (3.45%)</div>
<div class="bar" style="left:923.8px;top:188.2px;width:115px"><i style="width:8.6px"></i></div>
<div class="cell" style="left:125.5px;top:193.8px">Turkey</div>
<div class="cell" style="left:240.5px;top:193.8px">Mobile</div>
<div class="cell" style="left:331.5px;top:193.8px">Android</div>
<div class="cell" style="left:386.5px;top:193.8px">28615</div>
<div class="cell" style="left:446.3px;top:193.8px">2269 (7.93%)</div>
<div class="bar" style="left:446.8px;top:208.2px;width:93.8px"><i style="width:7.4px"></i></div>
<div class="cell" style="left:554.5px;top:193.8px">14450</div>
<div class="cell" style="left:624.5px;top:193.8px">1830 (12.66%)</div>
<div class="bar" style="left:626px;top:208.2px;width:167px"><i style="width:21.1px"></i></div>
<div class="cell" style="left:806.5px;top:193.8px">202</div>
<div class="cell" style="left:922.5px;top:193.8px">3 (1.49%)</div>
<div class="bar" style="left:923.8px;top:208.2px;width:115px"><i style="width:3.7px"></i></div>
<div class="cell" style="left:125.5px;top:213.8px">Mexico</div>
<div class="cell" style="left:240.5px;top:213.8px">Mobile</div>
<div class="cell" style="left:331.5px;top:213.8px">Android</div>
<div class="cell" style="left:386.5px;top:213.8px">115372</div>
<div class="cell" style="left:446.3px;top:213.8px">716 (0.62%)</div>
<div class="bar" style="left:446.8px;top:228.2px;width:93.8px"><i style="width:0.6px"></i></div>
<div class="cell" style="left:554.5px;top:213.8px">50063</div>
<div class="cell" style="left:624.5px;top:213.8px">604 (1.21%)</div>
<div class="bar" style="left:626px;top:228.2px;width:167px"><i style="width:2.0px"></i></div>
<div class="cell" style="left:806.5px;top:213.8px">179</div>
<div class="cell" style="left:922.5px;top:213.8px">1 (0.56%)</div>
<div class="bar" style="left:923.8px;top:228.2px;width:115px"><i style="width:1.4px"></i></div>
<div class="cell" style="left:125.5px;top:233.8px">United States</div>
<div class="cell" style="left:240.5px;top:233.8px">Mobile</div>
<div class="cell" style="left:331.5px;top:233.8px">Android</div>
<div class="cell" style="left:386.5px;top:233.8px">112031</div>
<div class="cell" style="left:446.3px;top:233.8px">16255 (14.51%)</div>
<div class="bar" style="left:446.8px;top:248.2px;width:93.8px"><i style="width:13.6px"></i></div>
<div class="cell" style="left:554.5px;top:233.8px">45145</div>
<div class="cell" style="left:624.5px;top:233.8px">7860 (17.41%)</div>
<div class="bar" style="left:626px;top:248.2px;width:167px"><i style="width:29.1px"></i></div>
<div class="cell" style="left:806.5px;top:233.8px">160</div>
<div class="cell" style="left:922.5px;top:233.8px">12 (7.5%)</div>
<div class="bar" style="left:923.8px;top:248.2px;width:115px"><i style="width:18.7px"></i></div>
<div class="cell" style="left:125.5px;top:253.8px">Nigeria</div>
<div class="cell" style="left:240.5px;top:253.8px">Mobile</div>
<div class="cell" style="left:331.5px;top:253.8px">Android</div>
<div class="cell" style="left:386.5px;top:253.8px">47283</div>
<div class="cell" style="left:446.3px;top:253.8px">2052 (4.34%)</div>
<div class="bar" style="left:446.8px;top:268.2px;width:93.8px"><i style="width:4.1px"></i></div>
<div class="cell" style="left:554.5px;top:253.8px">2097</div>
<div class="cell" style="left:624.5px;top:253.8px">612 (29.18%)</div>
<div class="bar" style="left:626px;top:268.2px;width:167px"><i style="width:48.7px"></i></div>
<div class="cell" style="left:806.5px;top:253.8px">145</div>
<div class="cell" style="left:922.5px;top:253.8px">0 (0%)</div>
<div class="bar" style="left:923.8px;top:268.2px;width:115px"><i style="width:0.0px"></i></div>
<div class="cell" style="left:125.5px;top:273.8px">United Kingdom</div>
<div class="cell" style="left:240.5px;top:273.8px">Mobile</div>
<div class="cell" style="left:331.5px;top:273.8px">IOS</div>
<div class="cell" style="left:386.5px;top:273.8px">108832</div>
<div class="cell" style="left:446.3px;top:273.8px">3012 (2.77%)</div>
<div class="bar" style="left:446.8px;top:288.2px;width:93.8px"><i style="width:2.6px"></i></div>
<div class="cell" style="left:554.5px;top:273.8px">17321</div>
<div class="cell" style="left:624.5px;top:273.8px">642 (3.71%)</div>
<div class="bar" style="left:626px;top:288.2px;width:167px"><i style="width:6.2px"></i></div>
<div class="cell" style="left:806.5px;top:273.8px">144</div>
<div class="cell" style="left:922.5px;top:273.8px">1 (0.69%)</div>
<div class="bar" style="left:923.8px;top:288.2px;width:115px"><i style="width:1.7px"></i></div>
<div class="cell" style="left:125.5px;top:293.8px">Ghana</div>
<div class="cell" style="left:240.5px;top:293.8px">Mobile</div>
<div class="cell" style="left:331.5px;top:293.8px">Android</div>
<div class="cell" style="left:386.5px;top:293.8px">1482</div>
<div class="cell" style="left:446.3px;top:293.8px">59 (3.98%)</div>
<div class="bar" style="left:446.8px;top:308.2px;width:93.8px"><i style="width:3.7px"></i></div>
<div class="cell" style="left:554.5px;top:293.8px">960</div>
<div class="cell" style="left:624.5px;top:293.8px">16 (1.67%)</div>
<div class="bar" style="left:626px;top:308.2px;width:167px"><i style="width:2.8px"></i></div>
<div class="cell" style="left:806.5px;top:293.8px">138</div>
<div class="cell" style="left:922.5px;top:293.8px">0 (0%)</div>
<div class="bar" style="left:923.8px;top:308.2px;width:115px"><i style="width:0.0px"></i></div>
<div class="cell" style="left:125.5px;top:313.8px">Switzerland</div>
<div class="cell" style="left:240.5px;top:313.8px">Mobile</div>
<div class="cell" style="left:331.5px;top:313.8px">Android</div>
<div class="cell" style="left:386.5px;top:313.8px">27535</div>
<div class="cell" style="left:446.3px;top:313.8px">6190 (22.48%)</div>
<div class="bar" style="left:446.8px;top:328.2px;width:93.8px"><i style="width:21.1px"></i></div>
<div class="cell" style="left:554.5px;top:313.8px">6510</div>
<div class="cell" style="left:624.5px;top:313.8px">1413 (21.71%)</div>
<div class="bar" style="left:626px;top:328.2px;width:167px"><i style="width:36.3px"></i></div>
<div class="cell" style="left:806.5px;top:313.8px">117</div>
<div class="cell" style="left:922.5px;top:313.8px">23 (19.66%)</div>
<div class="bar" style="left:923.8px;top:328.2px;width:115px"><i style="width:49.1px"></i></div>
<div class="cell" style="left:125.5px;top:333.8px">United Kingdom</div>
<div class="cell" style="left:240.5px;top:333.8px">Desktop</div>
<div class="cell" style="left:331.5px;top:333.8px">Windows</div>
<div class="cell" style="left:386.5px;top:333.8px">20083</div>
<div class="cell" style="left:446.3px;top:333.8px">1378 (6.86%)</div>
<div class="bar" style="left:446.8px;top:348.2px;width:93.8px"><i style="width:6.4px"></i></div>
<div class="cell" style="left:554.5px;top:333.8px">2324</div>
<div class="cell" style="left:624.5px;top:333.8px">204 (8.78%)</div>
<div class="bar" style="left:626px;top:348.2px;width:167px"><i style="width:14.7px"></i></div>
<div class="cell" style="left:806.5px;top:333.8px">109</div>
<div class="cell" style="left:922.5px;top:333.8px">0 (0%)</div>
<div class="bar" style="left:923.8px;top:348.2px;width:115px"><i style="width:0.0px"></i></div>
<div class="cell" style="left:125.5px;top:353.8px">Russian Federation</div>
<div class="cell" style="left:240.5px;top:353.8px">Mobile</div>
<div class="cell" style="left:331.5px;top:353.8px">Android</div>
<div class="cell" style="left:386.5px;top:353.8px">21452</div>
<div class="cell" style="left:446.3px;top:353.8px">1727 (8.05%)</div>
<div class="bar" style="left:446.8px;top:368.2px;width:93.8px"><i style="width:7.6px"></i></div>
<div class="cell" style="left:554.5px;top:353.8px">7078</div>
<div class="cell" style="left:624.5px;top:353.8px">154 (2.18%)</div>
<div class="bar" style="left:626px;top:368.2px;width:167px"><i style="width:3.6px"></i></div>
<div class="cell" style="left:806.5px;top:353.8px">101</div>
<div class="cell" style="left:922.5px;top:353.8px">0 (0%)</div>
<div class="bar" style="left:923.8px;top:368.2px;width:115px"><i style="width:0.0px"></i></div>
<div class="cell" style="left:125.5px;top:373.8px">Poland</div>
<div class="cell" style="left:240.5px;top:373.8px">Mobile</div>
<div class="cell" style="left:331.5px;top:373.8px">Android</div>
<div class="cell" style="left:386.5px;top:373.8px">76194</div>
<div class="cell" style="left:446.3px;top:373.8px">3181 (4.17%)</div>
<div class="bar" style="left:446.8px;top:388.2px;width:93.8px"><i style="width:3.9px"></i></div>
<div class="cell" style="left:554.5px;top:373.8px">30376</div>
<div class="cell" style="left:624.5px;top:373.8px">1932 (6.36%)</div>
<div class="bar" style="left:626px;top:388.2px;width:167px"><i style="width:10.6px"></i></div>
<div class="cell" style="left:806.5px;top:373.8px">100</div>
<div class="cell" style="left:922.5px;top:373.8px">1 (1%)</div>
<div class="bar" style="left:923.8px;top:388.2px;width:115px"><i style="width:2.5px"></i></div>
<div class="cell" style="left:125.5px;top:393.8px">Ecuador</div>
<div class="cell" style="left:240.5px;top:393.8px">Mobile</div>
<div class="cell" style="left:331.5px;top:393.8px">Android</div>
<div class="cell" style="left:386.5px;top:393.8px">5546</div>
<div class="cell" style="left:446.3px;top:393.8px">61 (1.1%)</div>
<div class="bar" style="left:446.8px;top:408.2px;width:93.8px"><i style="width:1.0px"></i></div>
<div class="cell" style="left:554.5px;top:393.8px">2879</div>
<div class="cell" style="left:624.5px;top:393.8px">23 (0.8%)</div>
<div class="bar" style="left:626px;top:408.2px;width:167px"><i style="width:1.3px"></i></div>
<div class="cell" style="left:806.5px;top:393.8px">90</div>
<div class="cell" style="left:922.5px;top:393.8px">0 (0%)</div>
<div class="bar" style="left:923.8px;top:408.2px;width:115px"><i style="width:0.0px"></i></div>
<div class="cell" style="left:125.5px;top:413.8px">Brazil</div>
<div class="cell" style="left:240.5px;top:413.8px">Mobile</div>
<div class="cell" style="left:331.5px;top:413.8px">Android</div>
<div class="cell" style="left:386.5px;top:413.8px">13586</div>
<div class="cell" style="left:446.3px;top:413.8px">157 (1.16%)</div>
<div class="bar" style="left:446.8px;top:428.2px;width:93.8px"><i style="width:1.1px"></i></div>
<div class="cell" style="left:554.5px;top:413.8px">6760</div>
<div class="cell" style="left:624.5px;top:413.8px">120 (1.78%)</div>
<div class="bar" style="left:626px;top:428.2px;width:167px"><i style="width:3.0px"></i></div>
<div class="cell" style="left:806.5px;top:413.8px">86</div>
<div class="cell" style="left:922.5px;top:413.8px">0 (0%)</div>
<div class="bar" style="left:923.8px;top:428.2px;width:115px"><i style="width:0.0px"></i></div>
<div class="cell" style="left:125.5px;top:433.8px">Italy</div>
<div class="cell" style="left:240.5px;top:433.8px">Mobile</div>
<div class="cell" style="left:331.5px;top:433.8px">Android</div>
<div class="cell" style="left:386.5px;top:433.8px">32676</div>
<div class="cell" style="left:446.3px;top:433.8px">2065 (6.32%)</div>
<div class="bar" style="left:446.8px;top:448.2px;width:93.8px"><i style="width:5.9px"></i></div>
<div class="cell" style="left:554.5px;top:433.8px">14646</div>
<div class="cell" style="left:624.5px;top:433.8px">1162 (7.93%)</div>
<div class="bar" style="left:626px;top:448.2px;width:167px"><i style="width:13.2px"></i></div>
<div class="cell" style="left:806.5px;top:433.8px">82</div>
<div class="cell" style="left:922.5px;top:433.8px">3 (3.66%)</div>
<div class="bar" style="left:923.8px;top:448.2px;width:115px"><i style="width:9.1px"></i></div>
<div class="cell" style="left:125.5px;top:453.8px">Germany</div>
<div class="cell" style="left:240.5px;top:453.8px">Mobile</div>
<div class="cell" style="left:331.5px;top:453.8px">IOS</div>
<div class="cell" style="left:386.5px;top:453.8px">69216</div>
<div class="cell" style="left:446.3px;top:453.8px">7407 (10.7%)</div>
<div class="bar" style="left:446.8px;top:468.2px;width:93.8px"><i style="width:10.0px"></i></div>
<div class="cell" style="left:554.5px;top:453.8px">19957</div>
<div class="cell" style="left:624.5px;top:453.8px">2157 (10.81%)</div>
<div class="bar" style="left:626px;top:468.2px;width:167px"><i style="width:18.1px"></i></div>
<div class="cell" style="left:806.5px;top:453.8px">79</div>
<div class="cell" style="left:922.5px;top:453.8px">2 (2.53%)</div>
<div class="bar" style="left:923.8px;top:468.2px;width:115px"><i style="width:6.3px"></i></div>
</div></div>
<div id="hline"></div>
<div id="vscroll"></div>
<div id="vthumb"></div>
<div id="hscroll"></div>
<div id="hthumb"></div>
<div id="hcorner"></div>

<svg class="abs" style="left:1042.5px;top:97.5px" width="4" height="2.5" viewBox="0 0 4 2.5"><path d="M0,2.5 H4 L2,0Z" fill="#666"/></svg>
<svg class="abs" style="left:1042.5px;top:459.7px" width="4" height="2.3" viewBox="0 0 4 2.3"><path d="M0,0 H4 L2,2.3Z" fill="#505050"/></svg>
<svg class="abs" style="left:1033px;top:470px" width="2.3" height="4" viewBox="0 0 2.3 4"><path d="M0,0 V4 L2.3,2Z" fill="#505050"/></svg>
<svg class="abs" style="left:121.5px;top:470px" width="2.3" height="4" viewBox="0 0 2.3 4"><path d="M2.3,0 V4 L0,2Z" fill="#a0a0a0"/></svg>
<svg class="abs" style="left:1035px;top:443.8px" width="6" height="9" viewBox="0 0 6 9"><path d="M5.2,0.6 L1,4.5 L5.2,8.4" fill="none" stroke="#4d5358" stroke-width="1.5"/></svg>
<div id="footer"></div>
<div class="fcell" style="left:386.5px">3378613</div>
<div class="fcell" style="left:446.3px">335183 (9.92%)</div>
<div class="fcell" style="left:554.5px">1062369</div>
<div class="fcell" style="left:624.5px">130291 (12.26%)</div>
<div class="fcell" style="left:806.5px">7016</div>
<div class="fcell" style="left:922.5px">227 (3.24%)</div>
</body></html>
